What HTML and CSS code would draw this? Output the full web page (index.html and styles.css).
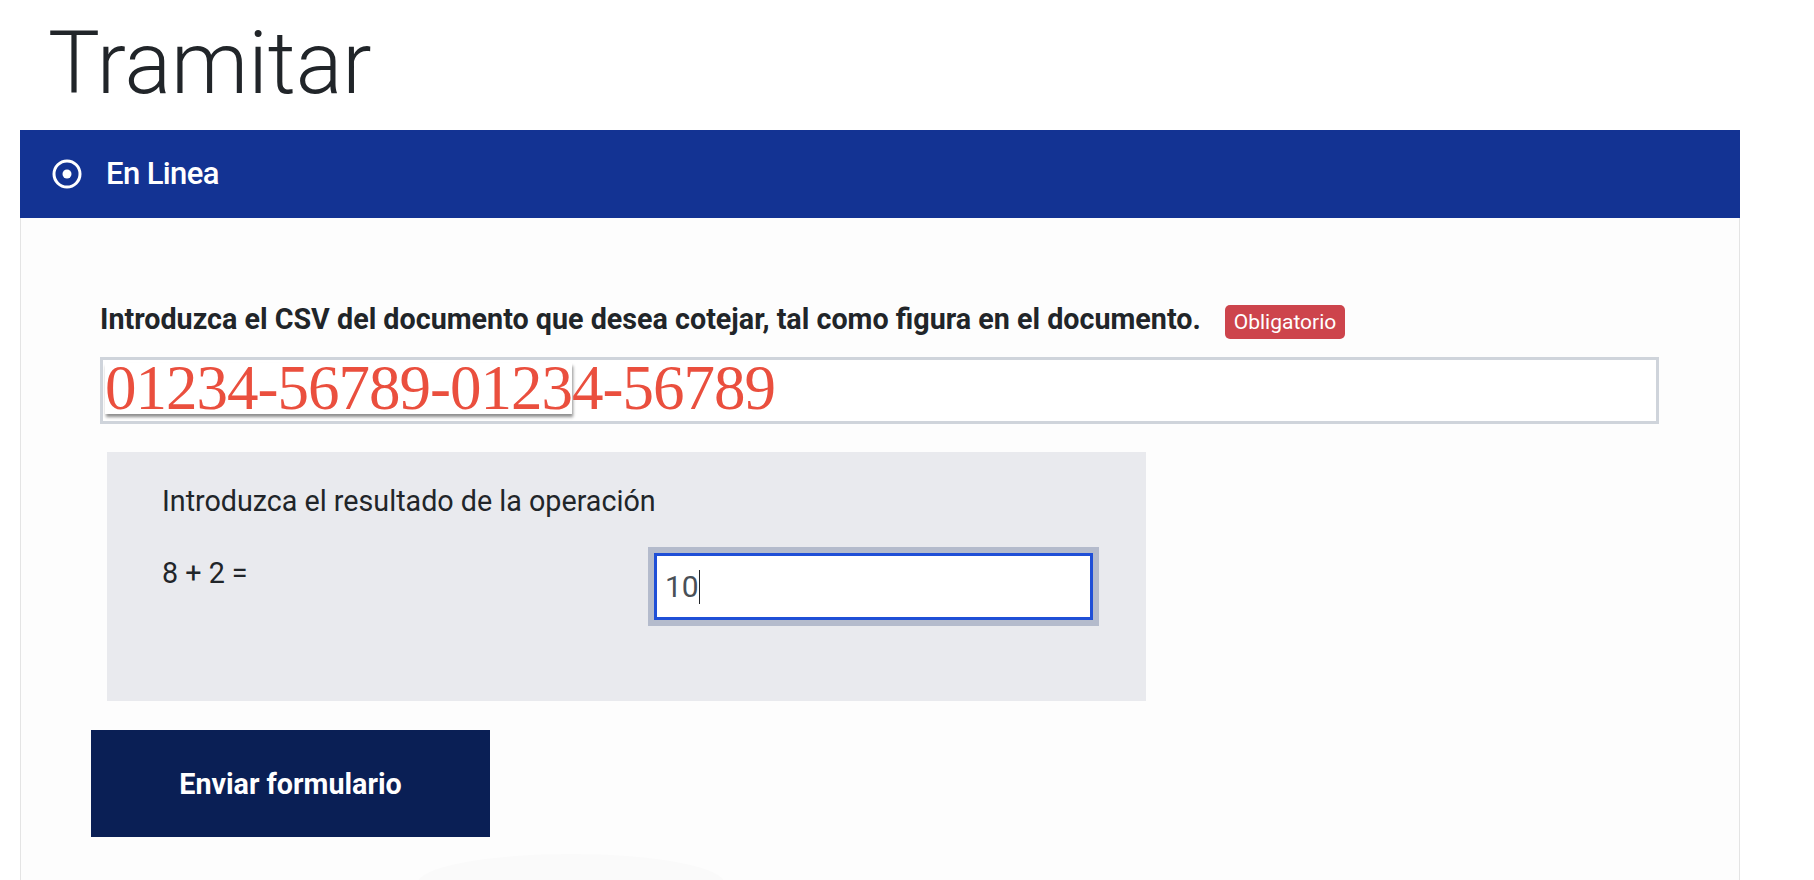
FILE: index.html
```html
<!DOCTYPE html>
<html lang="es">
<head>
    <meta charset="UTF-8">
    <meta name="viewport" content="width=device-width, initial-scale=1.0">
    <title>Tramitar</title>
    <link rel="stylesheet" href="styles.css">
</head>
<body>

    <div class="page">
        <h1 class="title">Tramitar</h1>

        <div class="panel">
            <div class="panel-head">
                <svg class="radio-icon" width="30" height="30" viewBox="0 0 30 30">
                    <circle cx="15" cy="15" r="13" fill="none" stroke="#fff" stroke-width="3"/>
                    <circle cx="15" cy="15" r="4.5" fill="#fff"/>
                </svg>
                <span class="panel-title">En Linea</span>
            </div>

            <div class="panel-body">
                <div class="field-label">
                    <label for="csv">Introduzca el CSV del documento que desea cotejar, tal como figura en el documento.</label>
                    <span class="badge">Obligatorio</span>
                </div>
                <div class="csv-field" id="csv"><span class="pasted">01234-56789-0123</span>4-56789</div>

                <div class="captcha">
                    <p class="captcha-text">Introduzca el resultado de la operación</p>
                    <div class="captcha-row">
                        <span class="operation">8 + 2 =</span>
                        <div class="captcha-input">10<span class="caret"></span></div>
                    </div>
                </div>

                <button class="submit-btn">Enviar formulario</button>
                <div class="faint"></div>
            </div>
        </div>
    </div>

</body>
</html>
```

FILE: styles.css
```css
* {
    margin: 0;
    padding: 0;
    box-sizing: border-box;
}
body {
    background: #fff;
    font-family: Roboto, "Liberation Sans", sans-serif;
    color: #212529;
    overflow: hidden;
}
.page {
    padding-left: 20px;
    width: 1740px;
}
.title {
    font-weight: 300;
    font-size: 87px;
    line-height: 104px;
    margin: 11px 0 15px 28px;
    color: #212529;
}
.panel {
    width: 1720px;
}
.panel-head {
    height: 88px;
    background: #133393;
    display: flex;
    align-items: center;
    padding-left: 32px;
    gap: 24px;
    color: #fff;
}
.panel-title {
    font-size: 31px;
    font-weight: 500;
    line-height: 36px;
    letter-spacing: -0.6px;
}
.panel-body {
    background: #fdfdfd;
    border: 1px solid #e4e4e4;
    border-top: none;
    padding: 85px 80px 40px 79px;
    height: 700px;
}
.field-label {
    display: flex;
    align-items: flex-start;
    gap: 24px;
    margin-bottom: 18px;
}
.field-label label {
    font-weight: 700;
    font-size: 28.7px;
    line-height: 32px;
}
.badge {
    margin-top: 2px;
    background: #cd444c;
    color: #fff;
    font-size: 21px;
    line-height: 34px;
    height: 34px;
    padding: 0 9px;
    border-radius: 5px;
}
.csv-field {
    height: 67px;
    border: 3px solid #cfd4db;
    background: #fff;
    padding: 3px 2px 0;
    font-family: "Liberation Serif", "Times New Roman", serif;
    font-size: 63px;
    letter-spacing: -1px;
    line-height: 51px;
    color: #ea4f3e;
    white-space: nowrap;
}
.pasted {
    display: inline-block;
    height: 51px;
    background: #fff;
    box-shadow: 1px 3px 3px rgba(0, 0, 0, 0.45);
}
.captcha {
    width: 1039px;
    margin: 28px 0 0 7px;
    background: #e9eaee;
    padding: 33px 0 81px 55px;
}
.captcha-text {
    font-size: 28.7px;
    line-height: 32px;
}
.captcha-row {
    display: grid;
    grid-template-columns: 492px 439px;
    align-items: start;
    margin-top: 36px;
}
.operation {
    font-size: 28.7px;
    line-height: 32px;
    margin-top: 4px;
}
.captcha-input {
    display: flex;
    align-items: center;
    height: 67px;
    width: 439px;
    border: 3px solid #1f4fd7;
    box-shadow: 0 0 0 6px #b4bbcc;
    padding: 0 8px;
    font-size: 30px;
    color: #495057;
    background: #fff;
}
.caret {
    display: inline-block;
    width: 1px;
    height: 34px;
    background: #212529;
}
.submit-btn {
    display: block;
    width: 399px;
    height: 107px;
    margin: 29px 0 0 -9px;
    background: #0a1f55;
    color: #fff;
    border: none;
    font-family: Roboto, sans-serif;
    font-weight: 700;
    font-size: 28.7px;
    cursor: pointer;
}
.faint {
    width: 308px;
    height: 40px;
    margin: 17px 0 0 317px;
    border-radius: 50% 50% 0 0 / 30px 30px 0 0;
    background: #fafafa;
}
```
